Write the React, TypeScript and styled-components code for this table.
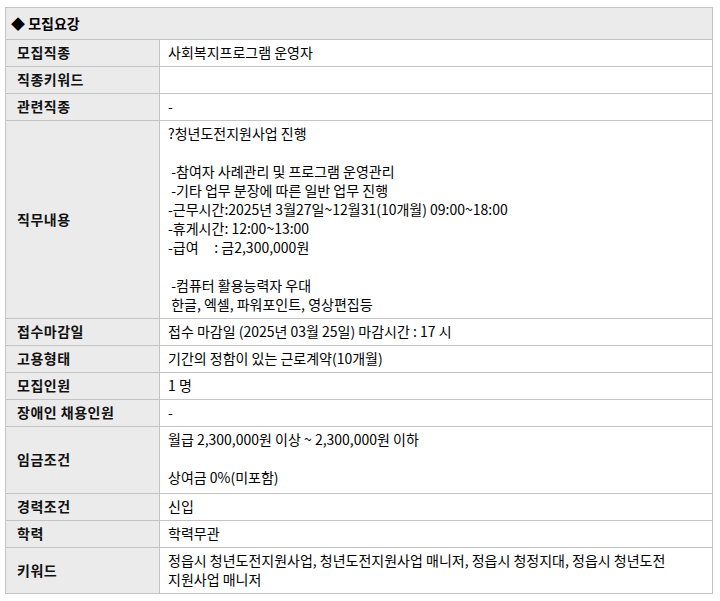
import styled, { createGlobalStyle } from "styled-components";

const GlobalStyle = createGlobalStyle`
  body {
    margin: 0;
    background: #ffffff;
    font-family: "Noto Sans CJK KR", "Noto Sans", sans-serif;
    font-size: 14px;
    color: #000;
  }
`;

const Page = styled.div`
  padding: 7px 0 0 5px;
`;

const Table = styled.table`
  width: 708px;
  border-collapse: collapse;
  table-layout: fixed;
`;

const Col = styled.col<{ $width?: number }>`
  width: ${(p) => (p.$width ? `${p.$width}px` : "auto")};
`;

const Caption = styled.th`
  background: #ebebeb;
  border: 1px solid #c4c4c4;
  text-align: left;
  font-weight: bold;
  line-height: 19px;
  padding: 6px 5px 6px;
`;

const Label = styled.th`
  background: #ebebeb;
  border: 1px solid #c4c4c4;
  text-align: left;
  vertical-align: middle;
  font-weight: bold;
  letter-spacing: 0.5px;
  color: #111;
  line-height: 19px;
  padding: 3px 0 4px 11px;
`;

const Value = styled.td<{ $extra?: number }>`
  border: 1px solid #c4c4c4;
  vertical-align: middle;
  line-height: 19px;
  padding: 3px 8px ${(p) => 4 + (p.$extra ?? 0)}px;
  white-space: pre-wrap;
`;

type Row = { label: string; value: string; extra?: number };

const rows: Row[] = [
  { label: "모집직종", value: "사회복지프로그램 운영자" },
  { label: "직종키워드", value: "" },
  { label: "관련직종", value: "-" },
  {
    label: "직무내용",
    value: [
      "?청년도전지원사업 진행",
      "",
      " -참여자 사례관리 및 프로그램 운영관리",
      " -기타 업무 분장에 따른 일반 업무 진행",
      "-근무시간:2025년 3월27일~12월31(10개월) 09:00~18:00",
      "-휴게시간: 12:00~13:00",
      "-급여     : 금2,300,000원",
      "",
      " -컴퓨터 활용능력자 우대",
      " 한글, 엑셀, 파워포인트, 영상편집등",
    ].join("\n"),
  },
  { label: "접수마감일", value: "접수 마감일 (2025년 03월 25일) 마감시간 : 17 시" },
  { label: "고용형태", value: "기간의 정함이 있는 근로계약(10개월)" },
  { label: "모집인원", value: "1 명" },
  { label: "장애인 채용인원", value: "-" },
  {
    label: "임금조건",
    value: "월급 2,300,000원 이상 ~ 2,300,000원 이하\n\n상여금 0%(미포함)",
    extra: 2,
  },
  { label: "경력조건", value: "신입" },
  { label: "학력", value: "학력무관" },
  {
    label: "키워드",
    value: "정읍시 청년도전지원사업, 청년도전지원사업 매니저, 정읍시 청정지대, 정읍시 청년도전\n지원사업 매니저",
  },
];

export default function App() {
  return (
    <Page>
      <GlobalStyle />
      <Table>
        <colgroup>
          <Col $width={154} />
          <Col />
        </colgroup>
        <thead>
          <tr>
            <Caption colSpan={2}>◆ 모집요강</Caption>
          </tr>
        </thead>
        <tbody>
          {rows.map((row) => (
            <tr key={row.label}>
              <Label>{row.label}</Label>
              <Value $extra={row.extra}>{row.value}</Value>
            </tr>
          ))}
        </tbody>
      </Table>
    </Page>
  );
}
